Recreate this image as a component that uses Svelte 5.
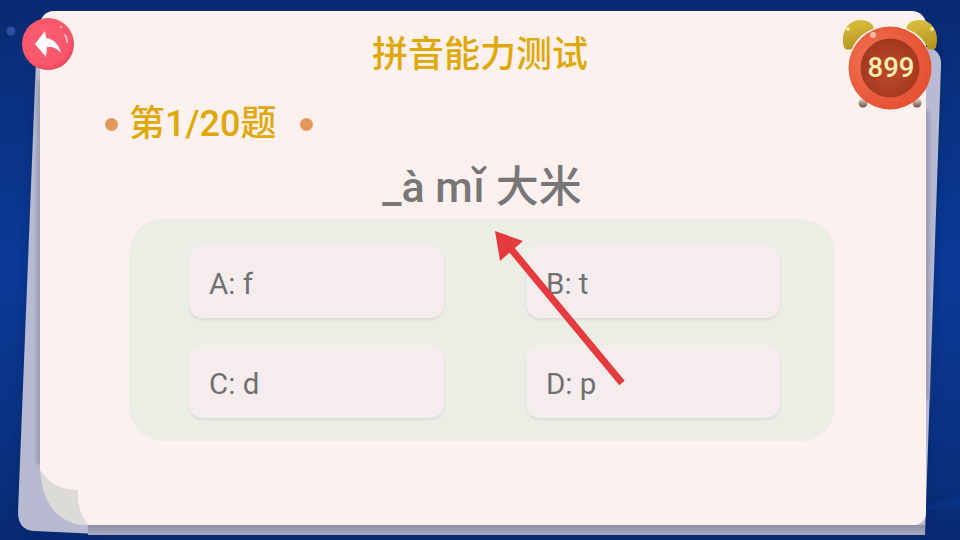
<script>
    const options = [
        { key: "A", text: "f" },
        { key: "B", text: "t" },
        { key: "C", text: "d" },
        { key: "D", text: "p" },
    ];
    let current = 1;
    let total = 20;
    let timeLeft = 899;
</script>

<div class="page">
    <svg class="backdrop" width="960" height="540" viewBox="0 0 960 540">
        <defs>
            <filter id="soft" x="-10%" y="-10%" width="120%" height="120%">
                <feGaussianBlur stdDeviation="5" />
            </filter>
            <filter id="edge" x="-200%" y="-5%" width="500%" height="110%">
                <feGaussianBlur stdDeviation="2" />
            </filter>
            <linearGradient id="under" x1="0" y1="0" x2="0" y2="1">
                <stop offset="0" stop-color="#8d8fa3" />
                <stop offset="1" stop-color="#a9aabd" />
            </linearGradient>
        </defs>
        <circle cx="11" cy="31" r="4.500" fill="#2c4f9f" />
        <path d="M925 505C940 503 950 500 960 497V507C950 508 940 509 925 510Z" fill="#0a3285" />
        <path d="M36 60L18 512Q18 530 34 531L120 535H925L941 60V44H60Z" fill="#06215f" opacity="0.55" filter="url(#soft)" />
        <path d="M36 60L18 512Q18 530 34 531L120 535H925L941 66Q942 50 927 47L60 40Z" fill="#b7bad2" />
        <rect x="37" y="80" width="5" height="385" fill="#84869c" opacity="0.7" filter="url(#edge)" />
        <rect x="924" y="110" width="5" height="290" fill="#84869c" opacity="0.7" filter="url(#edge)" />
        <rect x="88" y="525" width="837" height="10" fill="url(#under)" />
    </svg>

    <main class="paper">
        <svg class="curl" width="50" height="55" viewBox="0 0 50 55">
            <path d="M0 0Q12 20 38 20Q36 40 48 55H42Q4 50 0 0Z" fill="#dcdbd8" />
            <path d="M0 0Q12 20 38 20Q36 40 48 55H50V-1H0Z" fill="#fdf1f0" />
        </svg>

        <h1 class="title">拼音能力测试</h1>

        <div class="progress">
            <span class="dot"></span>
            <span class="count">第{current}/{total}题</span>
            <span class="dot"></span>
        </div>

        <p class="question">_à mǐ 大米</p>

        <section class="panel">
            {#each options as option}
                <button class="option">{option.key}: {option.text}</button>
            {/each}
        </section>
    </main>

    <button class="back" aria-label="返回">
        <svg width="52" height="52" viewBox="0 0 52 52">
            <defs>
                <radialGradient id="ball" cx="0.45" cy="0.42" r="0.62">
                    <stop offset="0" stop-color="#fb5f72" />
                    <stop offset="0.78" stop-color="#f9566a" />
                    <stop offset="1" stop-color="#e63f58" />
                </radialGradient>
            </defs>
            <circle cx="26" cy="26" r="26" fill="url(#ball)" />
            <path d="M13 26L23 13L24 20C32 21 37 27 39 35C35 30 31 28.500 25 29L24 39Z" fill="#fff" />
            <path d="M43 17Q45 20 45 24" stroke="#fcc0c8" stroke-width="1.800" fill="none" stroke-linecap="round" />
            <circle cx="39" cy="9" r="1.200" fill="#fcb0ba" />
        </svg>
    </button>

    <div class="clock">
        <svg width="100" height="110" viewBox="0 0 100 110">
            <defs>
                <linearGradient id="bell" x1="0.3" y1="0" x2="0.5" y2="1">
                    <stop offset="0" stop-color="#d9bf3f" />
                    <stop offset="1" stop-color="#b3951f" />
                </linearGradient>
                <radialGradient id="ring" cx="0.36" cy="0.42" r="0.68">
                    <stop offset="0" stop-color="#f27a5c" />
                    <stop offset="0.7" stop-color="#e9583a" />
                    <stop offset="1" stop-color="#e4502f" />
                </radialGradient>
                <radialGradient id="face" cx="0.5" cy="0.55" r="0.55">
                    <stop offset="0" stop-color="#bd4b2b" />
                    <stop offset="1" stop-color="#a2381e" />
                </radialGradient>
                <linearGradient id="foot" x1="0" y1="0" x2="0" y2="1">
                    <stop offset="0" stop-color="#e2dad6" />
                    <stop offset="1" stop-color="#6e4a3e" />
                </linearGradient>
            </defs>
            <path d="M4 38C0 24 8 11 20 11C29 11 35 16 33 20C25 23 17 28 12 40C8 41 5 41 4 38Z" fill="url(#bell)" />
            <path d="M96 38C100 24 92 11 80 11C71 11 65 16 67 20C75 23 83 28 88 40C92 41 95 41 96 38Z" fill="url(#bell)" />
            <circle cx="8" cy="20" r="1.800" fill="#f6eeb0" />
            <circle cx="92" cy="20" r="1.800" fill="#f6eeb0" />
            <circle cx="23" cy="94" r="4.500" fill="url(#foot)" />
            <circle cx="77" cy="94" r="4.500" fill="url(#foot)" />
            <circle cx="50" cy="59" r="41.500" fill="url(#ring)" />
            <circle cx="50" cy="59" r="29.500" fill="url(#face)" />
            <circle cx="33" cy="26" r="3" fill="#fbb9a8" />
        </svg>
        <span class="time">{timeLeft}</span>
    </div>

    <svg class="arrow" width="960" height="540" viewBox="0 0 960 540">
        <path d="M622 383L511 249" stroke="#e53a3e" stroke-width="7" fill="none" />
        <path d="M495 231L523 241L500 261Z" fill="#e53a3e" />
    </svg>
</div>

<style>
    :global(body) {
        margin: 0;
    }
    .page {
        position: relative;
        width: 960px;
        height: 540px;
        overflow: hidden;
        background: linear-gradient(#082a72 0, #082a72 12px, #0a3180 90px, #0b3a98 270px, #0a3180 450px, #082a72 100%);
        font-family: Roboto, "Noto Sans CJK SC", sans-serif;
    }
    .backdrop,
    .arrow {
        position: absolute;
        left: 0;
        top: 0;
    }
    .arrow {
        pointer-events: none;
    }
    .paper {
        position: absolute;
        left: 40px;
        top: 11px;
        width: 886px;
        height: 514px;
        box-sizing: border-box;
        padding: 21px 2px 0 0;
        display: flex;
        flex-direction: column;
        align-items: center;
        background: #fdf1f0;
        border-radius: 14px 14px 12px 12px;
    }
    .curl {
        position: absolute;
        left: 0;
        bottom: 0;
        background: #b7bad2;
    }
    .title {
        margin: 0 4px 0 0;
        font-size: 36px;
        line-height: 46px;
        font-weight: 500;
        color: #e0a806;
    }
    .progress {
        align-self: flex-start;
        display: flex;
        align-items: center;
        margin: 21px 0 0 65px;
        gap: 11px;
    }
    .dot {
        width: 13px;
        height: 13px;
        border-radius: 50%;
        background: #e5985c;
    }
    .count {
        margin-right: 13px;
        font-size: 36px;
        line-height: 50px;
        font-weight: 500;
        color: #e0a806;
    }
    .question {
        margin: 13px 0 0;
        font-size: 43px;
        line-height: 50px;
        font-weight: 500;
        color: #777;
    }
    .panel {
        margin: 7px 0 0;
        box-sizing: border-box;
        width: 706px;
        height: 222px;
        padding: 26px 55px 23px 60px;
        display: grid;
        grid-template-columns: 255px 254px;
        grid-template-rows: 73px 73px;
        justify-content: space-between;
        row-gap: 27px;
        background: #ecede5;
        border-radius: 34px;
    }
    .option {
        border: none;
        padding: 5px 0 0 20px;
        text-align: left;
        font-family: inherit;
        font-size: 29.500px;
        font-weight: 400;
        color: #707070;
        background: #f5eded;
        border-radius: 14px;
        box-shadow: 0 2px 3px rgba(0, 0, 0, 0.08);
    }
    .back {
        position: absolute;
        left: 22px;
        top: 18px;
        width: 52px;
        height: 52px;
        padding: 0;
        border: none;
        background: none;
    }
    .back svg,
    .clock svg {
        display: block;
    }
    .clock {
        position: absolute;
        left: 840px;
        top: 9px;
        width: 100px;
        height: 110px;
    }
    .time {
        position: absolute;
        left: 2px;
        right: 0;
        top: 41px;
        text-align: center;
        font-size: 27.500px;
        line-height: 36px;
        font-weight: 500;
        color: #fdeeb0;
    }
</style>
